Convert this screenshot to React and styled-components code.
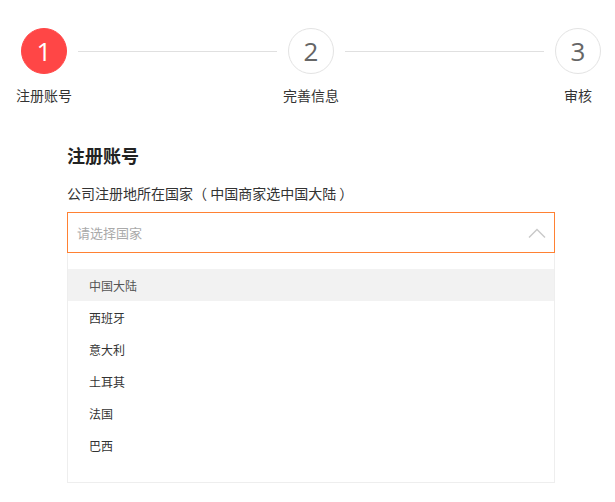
import React from 'react'
import styled, { createGlobalStyle } from 'styled-components'

const GlobalStyle = createGlobalStyle`
  body {
    margin: 0;
    background: #fff;
    font-family: "Noto Sans CJK SC", "Noto Sans", sans-serif;
    color: #333;
  }
`

const steps = ['注册账号', '完善信息', '审核']
const countries = ['中国大陆', '西班牙', '意大利', '土耳其', '法国', '巴西']

function Steps({ current }) {
  return (
    <StepRow>
      {steps.map((label, i) => (
        <React.Fragment key={label}>
          {i > 0 && <Line />}
          <Step>
            <Circle active={i === current}>{i + 1}</Circle>
            <StepLabel>{label}</StepLabel>
          </Step>
        </React.Fragment>
      ))}
    </StepRow>
  )
}

function Chevron() {
  return (
    <svg width="18" height="10" viewBox="0 0 18 10" fill="none">
      <path d="M1 9.5 L9 1.5 L17 9.5" stroke="#c8c8c8" strokeWidth="1.4" />
    </svg>
  )
}

export default function App() {
  return (
    <Page>
      <GlobalStyle />
      <Steps current={0} />
      <Form>
        <Title>注册账号</Title>
        <FieldLabel>公司注册地所在国家（ 中国商家选中国大陆 ）</FieldLabel>
        <Select>
          <Placeholder>请选择国家</Placeholder>
          <Chevron />
        </Select>
        <Dropdown>
          {countries.map((c, i) => (
            <Option key={c} hover={i === 0}>{c}</Option>
          ))}
        </Dropdown>
      </Form>
    </Page>
  )
}

const Page = styled.div`
  width: 615px;
  height: 502px;
  overflow: hidden;
`

const StepRow = styled.div`
  display: flex;
  align-items: flex-start;
  padding: 28px 9px 0 16px;
`

const Step = styled.div`
  width: 56px;
  display: flex;
  flex-direction: column;
  align-items: center;
`

const Circle = styled.div`
  width: 46px;
  height: 46px;
  box-sizing: border-box;
  border-radius: 50%;
  display: flex;
  align-items: center;
  justify-content: center;
  font-family: "Open Sans", "Noto Sans", sans-serif;
  font-size: 26px;
  font-weight: 400;
  background: ${p => (p.active ? '#ff4646' : '#fff')};
  color: ${p => (p.active ? '#fff' : '#666')};
  border: 1px solid ${p => (p.active ? '#ff4646' : '#e3e3e3')};
`

const StepLabel = styled.div`
  margin-top: 11px;
  font-size: 14px;
  line-height: 20px;
  color: #333;
  white-space: nowrap;
`

const Line = styled.div`
  flex: 1;
  height: 1px;
  background: #e0e0e0;
  margin: 23px 6px 0;
`

const Form = styled.div`
  width: 488px;
  margin: 38px 0 0 67px;
`

const Title = styled.div`
  font-size: 18px;
  line-height: 24px;
  font-weight: bold;
  color: #222;
`

const FieldLabel = styled.div`
  margin-top: 16px;
  font-size: 14px;
  line-height: 20px;
  color: #333;
`

const Select = styled.div`
  margin-top: 9px;
  height: 41px;
  box-sizing: border-box;
  border: 1px solid #ff8133;
  display: flex;
  align-items: center;
  justify-content: space-between;
  padding: 0 8px 0 9px;
`

const Placeholder = styled.span`
  font-size: 13px;
  color: #aaa;
`

const Dropdown = styled.div`
  box-sizing: border-box;
  border: 1px solid #eeeeee;
  border-top: none;
  padding: 16px 0 18px;
  height: 230px;
`

const Option = styled.div`
  height: 32px;
  display: flex;
  align-items: center;
  padding-left: 21px;
  font-size: 12px;
  color: ${p => (p.hover ? '#555' : '#333')};
  background: ${p => (p.hover ? '#f2f2f2' : 'transparent')};
`
